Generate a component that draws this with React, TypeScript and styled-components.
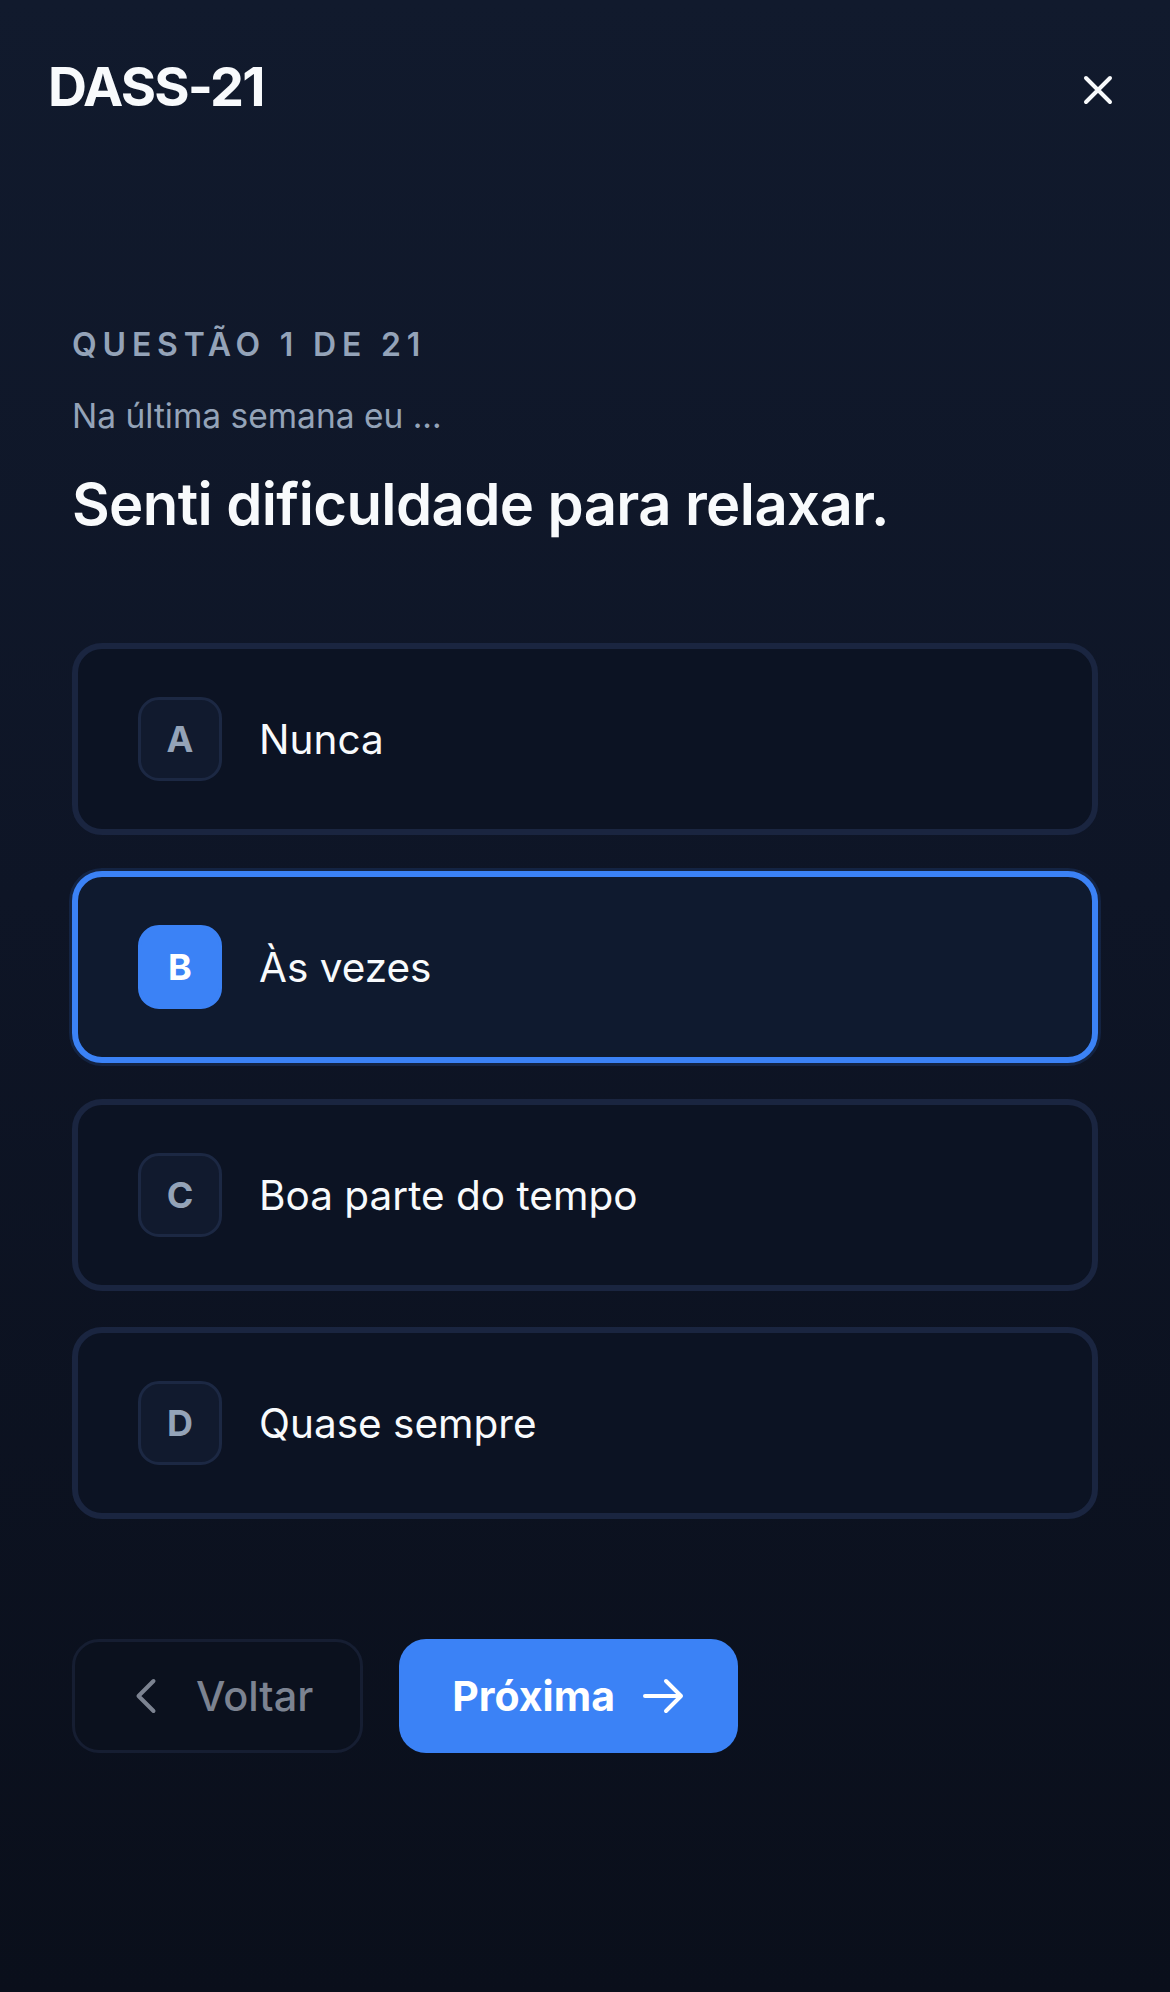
import React from 'react';
import styled, { createGlobalStyle } from 'styled-components';

const GlobalStyle = createGlobalStyle`
  html, body {
    margin: 0;
    padding: 0;
    background: #0b101d;
  }
  * {
    box-sizing: border-box;
  }
`;

const Page = styled.div`
  min-height: 100vh;
  padding-top: 48px;
  background: linear-gradient(180deg, #111a2d 0%, #0e1526 45%, #0a0f1b 100%);
  font-family: Inter, 'Noto Sans', sans-serif;
  color: #f8fafc;
`;

const Header = styled.header`
  display: flex;
  justify-content: space-between;
  align-items: center;
  height: 84px;
  padding: 0 48px;
`;

const Title = styled.h1`
  margin: 0 0 6px;
  font-size: 54px;
  font-weight: 700;
  letter-spacing: -1.8px;
  line-height: 1;
  color: #f8fafc;
`;

const CloseButton = styled.button`
  width: 48px;
  height: 48px;
  padding: 0;
  border: none;
  background: transparent;
  color: #f8fafc;
  display: flex;
  align-items: center;
  justify-content: center;
`;

const Main = styled.main`
  padding: 194px 72px 0;
`;

const Counter = styled.div`
  font-size: 32px;
  line-height: 38px;
  font-weight: 600;
  letter-spacing: 5.8px;
  text-transform: uppercase;
  color: #94a3b8;
`;

const Prompt = styled.p`
  margin: 33px 0 0;
  font-size: 33.5px;
  line-height: 38px;
  color: #94a3b8;
`;

const Question = styled.h2`
  margin: 35px 0 0;
  font-size: 58px;
  line-height: 68px;
  font-weight: 600;
  letter-spacing: -0.6px;
  color: #f8fafc;
`;

const Options = styled.div`
  margin-top: 105px;
  display: flex;
  flex-direction: column;
  gap: 36px;
`;

const Option = styled.button<{ $selected?: boolean }>`
  height: 192px;
  display: flex;
  align-items: center;
  gap: 37px;
  padding: 0 60px;
  border: 6px solid ${(p) => (p.$selected ? '#3b82f6' : '#1a2540')};
  border-radius: 30px;
  background: ${(p) => (p.$selected ? '#0f1a2f' : '#0c1323')};
  box-shadow: ${(p) => (p.$selected ? '0 0 0 3px rgba(59, 130, 246, 0.14)' : 'none')};
  font-family: inherit;
  text-align: left;
  cursor: pointer;
`;

const Badge = styled.span<{ $selected?: boolean }>`
  width: 84px;
  height: 84px;
  flex-shrink: 0;
  display: flex;
  align-items: center;
  justify-content: center;
  border-radius: 21px;
  border: 3px solid ${(p) => (p.$selected ? '#3b82f6' : '#1c2843')};
  background: ${(p) => (p.$selected ? '#3b82f6' : '#111a2e')};
  color: ${(p) => (p.$selected ? '#ffffff' : '#94a3b8')};
  font-size: 36px;
  font-weight: 700;
`;

const OptionLabel = styled.span`
  font-size: 40.5px;
  font-weight: 400;
  color: #f8fafc;
`;

const Actions = styled.div`
  margin-top: 120px;
  display: flex;
  gap: 36px;
`;

const BackButton = styled.button`
  height: 114px;
  display: flex;
  align-items: center;
  gap: 26px;
  padding: 0 47px 0 47px;
  border: 3px solid #161e32;
  border-radius: 27px;
  background: #0b111e;
  color: #7c8391;
  font-family: inherit;
  font-size: 41.5px;
  font-weight: 500;
`;

const NextButton = styled.button`
  height: 114px;
  display: flex;
  align-items: center;
  gap: 24px;
  padding: 0 51px 0 53px;
  border: none;
  border-radius: 27px;
  background: #3b82f6;
  color: #ffffff;
  font-family: inherit;
  font-size: 41px;
  font-weight: 700;
`;

const Icon: React.FC<{ d: string }> = ({ d }) => (
  <svg width="48" height="48" viewBox="0 0 24 24" fill="none" stroke="currentColor" strokeWidth="2" strokeLinecap="round" strokeLinejoin="round">
    <path d={d} />
  </svg>
);

const options = [
  { key: 'A', label: 'Nunca' },
  { key: 'B', label: 'Às vezes' },
  { key: 'C', label: 'Boa parte do tempo' },
  { key: 'D', label: 'Quase sempre' },
];

const App: React.FC = () => {
  const selected = 'B';

  return (
    <Page>
      <GlobalStyle />
      <Header>
        <Title>DASS-21</Title>
        <CloseButton aria-label="Fechar">
          <Icon d="M6 18 18 6M6 6l12 12" />
        </CloseButton>
      </Header>
      <Main>
        <Counter>Questão 1 de 21</Counter>
        <Prompt>Na última semana eu ...</Prompt>
        <Question>Senti dificuldade para relaxar.</Question>
        <Options>
          {options.map((o) => (
            <Option key={o.key} $selected={o.key === selected}>
              <Badge $selected={o.key === selected}>{o.key}</Badge>
              <OptionLabel>{o.label}</OptionLabel>
            </Option>
          ))}
        </Options>
        <Actions>
          <BackButton>
            <Icon d="M15.75 19.5 8.25 12l7.5-7.5" />
            Voltar
          </BackButton>
          <NextButton>
            Próxima
            <Icon d="M13.5 4.5 21 12m0 0-7.5 7.5M21 12H3" />
          </NextButton>
        </Actions>
      </Main>
    </Page>
  );
};

export default App;
